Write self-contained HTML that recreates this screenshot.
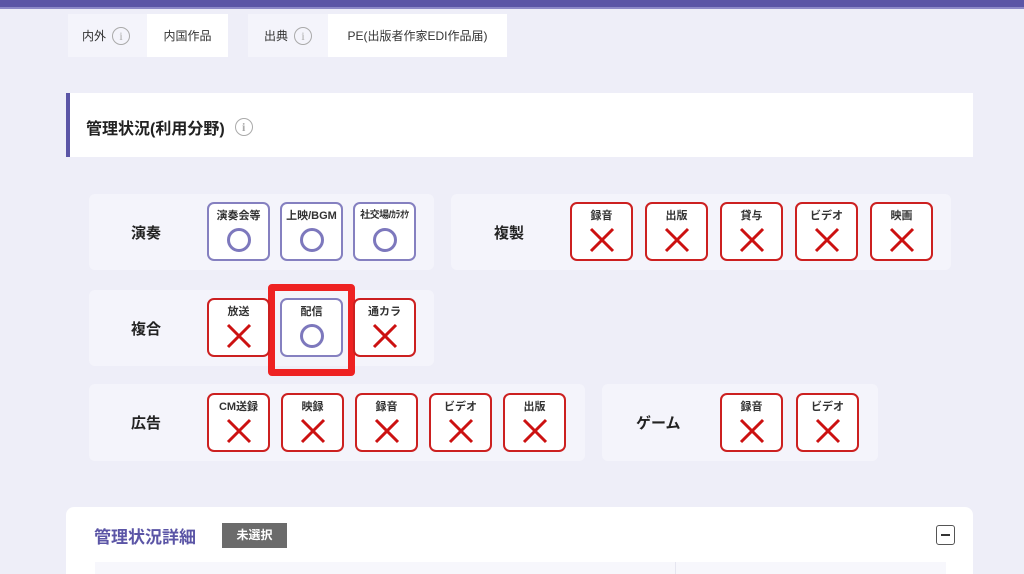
<!DOCTYPE html>
<html><head><meta charset="utf-8"><style>
*{box-sizing:border-box;margin:0;padding:0}
html,body{width:1024px;height:574px;overflow:hidden}
body{background:#eeeef8;font-family:"Liberation Sans","Noto Sans CJK JP",sans-serif;position:relative;color:#222}
.a{position:absolute}
.top{left:0;top:0;width:1024px;height:9px;background:#5b55a6;border-bottom:2px solid #8d89c8}
.cell{position:absolute;top:14px;height:43px;display:flex;align-items:center;font-size:12px;color:#333}
.lab{background:#f4f4fb;padding-left:14px}
.val{background:#fff;justify-content:center}
.ic{display:inline-block;width:18px;height:18px;border:1px solid #aaa;border-radius:50%;margin-left:6px;color:#aaa;font-size:12px;text-align:center;line-height:16px;font-family:"Liberation Serif",serif}
.grp{position:absolute;background:#f4f4fb;border-radius:6px}
.gl{position:absolute;font-size:15px;font-weight:bold;color:#222}
.b{position:absolute;width:63px;height:59px;background:#fff;border:2px solid #cc2020;border-radius:7px;text-align:center}
.b.o{border-color:#8580c0}
.b span{display:block;font-size:11px;font-weight:bold;margin-top:5px;height:14px;line-height:14px;white-space:nowrap;color:#333}
.b svg{display:block;margin:4px auto 0}
</style></head><body>
<div class="a top"></div>
<div class="cell lab" style="left:68px;width:79px">内外<span class="ic">i</span></div>
<div class="cell val" style="left:147px;width:81px">内国作品</div>
<div class="cell lab" style="left:248px;width:80px;padding-left:16px">出典<span class="ic">i</span></div>
<div class="cell val" style="left:328px;width:179px">PE(出版者作家EDI作品届)</div>

<div class="a" style="left:66px;top:93px;width:907px;height:64px;background:#fff;border-left:4px solid #5b55a6"></div>
<div class="a" style="left:86px;top:115px;font-size:16px;font-weight:bold;color:#222;display:flex;align-items:center">管理状況(利用分野)<span class="ic" style="margin-left:10px">i</span></div>

<div class="grp" style="left:89px;top:194px;width:345px;height:76px"></div>
<div class="gl" style="left:131px;top:222px">演奏</div>
<div class="grp" style="left:451px;top:194px;width:500px;height:76px"></div>
<div class="gl" style="left:494px;top:222px">複製</div>
<div class="grp" style="left:89px;top:290px;width:345px;height:76px"></div>
<div class="gl" style="left:131px;top:318px">複合</div>
<div class="grp" style="left:89px;top:384px;width:496px;height:77px"></div>
<div class="gl" style="left:131px;top:412px">広告</div>
<div class="grp" style="left:602px;top:384px;width:276px;height:77px"></div>
<div class="gl" style="left:636px;top:412px">ゲーム</div>

<div class="a" style="left:268px;top:284px;width:87px;height:92px;border:7px solid #ee2222;border-radius:4px"></div>

<div id="btns"></div>
<script>
const O='<svg width="26" height="26"><circle cx="13" cy="13" r="10.5" fill="none" stroke="#7d78bd" stroke-width="3"/></svg>';
const X='<svg width="26" height="26"><path d="M2 2L24 24M24 2L2 24" stroke="#cc1111" stroke-width="3"/></svg>';
const B=[
[207,202,'演奏会等',1],[280,202,'上映/BGM',1],[353,202,'社交場/ｶﾗｵｹ',1],
[570,202,'録音'],[645,202,'出版'],[720,202,'貸与'],[795,202,'ビデオ'],[870,202,'映画'],
[207,298,'放送'],[280,298,'配信',1],[353,298,'通カラ'],
[207,393,'CM送録'],[281,393,'映録'],[355,393,'録音'],[429,393,'ビデオ'],[503,393,'出版'],
[720,393,'録音'],[796,393,'ビデオ']];
let h='';for(const [x,y,t,o] of B){h+=`<div class="b${o?' o':''}" style="left:${x}px;top:${y}px"><span${t.length>6?' style="font-size:10px;letter-spacing:-0.5px"':''}>${t}</span>${o?O:X}</div>`}
document.getElementById('btns').innerHTML=h;
</script>

<div class="a" style="left:66px;top:507px;width:907px;height:80px;background:#fff;border-radius:8px"></div>
<div class="a" style="left:94px;top:523px;font-size:17px;font-weight:bold;color:#5b55a6">管理状況詳細</div>
<div class="a" style="left:222px;top:523px;width:65px;height:25px;background:#6b6b6b;color:#fff;font-size:12px;font-weight:bold;text-align:center;line-height:25px">未選択</div>
<div class="a" style="left:936px;top:525px;width:19px;height:20px;border:1px solid #555;border-radius:3px"><div class="a" style="left:4px;top:8px;width:9px;height:2px;background:#333"></div></div>
<div class="a" style="left:95px;top:562px;width:851px;height:20px;background:#f7f7fc"></div>
<div class="a" style="left:675px;top:562px;width:1px;height:20px;background:#e6e6f0"></div>
</body></html>
